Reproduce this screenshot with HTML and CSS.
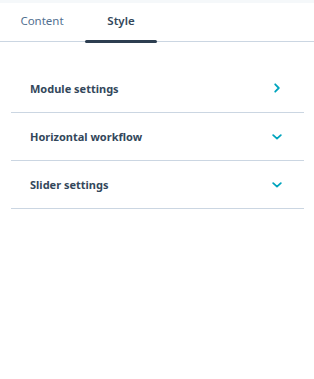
FILE: index.html
```html
<!DOCTYPE html>
<html lang="en">
<head>
  <meta charset="UTF-8">
  <title>Module style</title>
  <link rel="stylesheet" href="styles.css">
</head>
<body>
  <div class="topbar"></div>
  <div class="tabs">
    <div class="tab">Content</div>
    <div class="tab active">Style</div>
  </div>

  <div class="groups">
    <div class="group">
      <span>Module settings</span>
      <svg class="chev" width="10" height="10" viewBox="0 0 10 10">
        <path d="M3.2 1.3 L6.8 5 L3.2 8.7" fill="none" stroke="#00a4bd" stroke-width="1.8" stroke-linecap="round" stroke-linejoin="round"/>
      </svg>
    </div>
    <div class="group">
      <span>Horizontal workflow</span>
      <svg class="chev" width="10" height="10" viewBox="0 0 10 10">
        <path d="M1.2 3.2 L5 6.6 L8.8 3.2" fill="none" stroke="#00a4bd" stroke-width="1.8" stroke-linecap="round" stroke-linejoin="round"/>
      </svg>
    </div>
    <div class="group">
      <span>Slider settings</span>
      <svg class="chev" width="10" height="10" viewBox="0 0 10 10">
        <path d="M1.2 3.2 L5 6.6 L8.8 3.2" fill="none" stroke="#00a4bd" stroke-width="1.8" stroke-linecap="round" stroke-linejoin="round"/>
      </svg>
    </div>
  </div>
</body>
</html>
```

FILE: styles.css
```css
body {
  margin: 0;
  font-family: "Noto Sans", sans-serif;
  background: white;
  color: #33475b;
}
.topbar {
  height: 3px;
  background: #f5f8fa;
}
.tabs {
  display: flex;
  height: 38px;
  border-bottom: 1px solid #cbd6e2;
}
.tab {
  position: relative;
  width: 72px;
  margin-left: 6px;
  text-align: center;
  font-size: 11.5px;
  line-height: 36px;
  color: #516f90;
}
.tab.active {
  margin-left: 7px;
  color: #33475b;
  font-weight: 600;
}
.tab.active::after {
  content: "";
  position: absolute;
  left: 0;
  right: 0;
  bottom: -2px;
  height: 3px;
  border-radius: 2px;
  background: #2d3e50;
}
.groups {
  padding: 22px 10px 0 11px;
}
.group {
  display: flex;
  align-items: center;
  justify-content: space-between;
  height: 47px;
  padding: 0 22px 0 19px;
  border-bottom: 1px solid #cbd6e2;
  font-size: 11px;
  font-weight: 700;
}
.group:first-child {
  height: 48px;
}
.chev {
  display: block;
}
```
